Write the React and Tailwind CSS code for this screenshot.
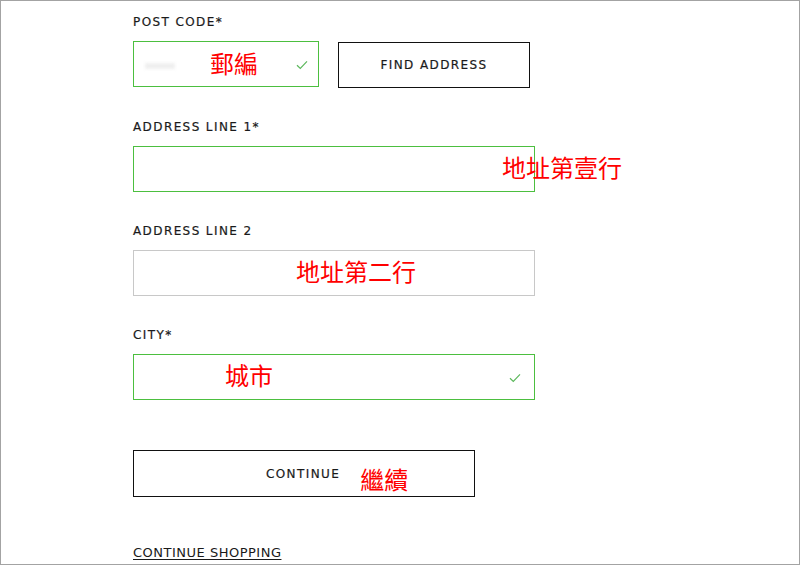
import React from 'react';

const labelFont = { fontFamily: '"DejaVu Sans", "Liberation Sans", sans-serif' };
const cjkFont = { fontFamily: '"Noto Sans CJK TC", "Noto Sans CJK SC", sans-serif' };

const Check = () => (
    <svg className="shrink-0" width="12" height="10" viewBox="0 0 12 10" fill="none">
        <path d="M1 5.2 L4.3 8.4 L11 1.4" stroke="#5cb85c" strokeWidth="1.2" />
    </svg>
);

// Red annotation written over the form
const Note = ({ children, className = '' }) => (
    <span
        className={`shrink-0 text-[24px] leading-none text-[#ff0000] whitespace-nowrap ${className}`}
        style={cjkFont}
    >
        {children}
    </span>
);

const Label = ({ children }) => (
    <div
        className="h-5 leading-5 mb-[9px] text-[12px] tracking-[1.4px] text-[#1a1a1a] [-webkit-text-stroke:0.2px_#1a1a1a]"
        style={labelFont}
    >
        {children}
    </div>
);

const Field = ({ label, border, children }) => (
    <div className="mt-[29px]">
        <Label>{label}</Label>
        <div className={`w-[402px] h-[46px] border ${border} flex items-center`}>{children}</div>
    </div>
);

export default function App() {
    return (
        <div className="w-[800px] h-[565px] bg-white border border-[#a3a3a3] overflow-hidden">
            <div className="pl-[132px] pt-[11px]">
                {/* Post code */}
                <Label>POST CODE*</Label>
                <div className="flex gap-[19px] items-start">
                    <div className="w-[186px] h-[46px] border border-[#4cbf3f] flex items-center pl-[11px] pr-[10px]">
                        <span className="w-[30px] h-[6px] bg-[#efefef] blur-[1.5px] mt-[3px]" />
                        <Note className="ml-[35px] -mt-[2px]">郵編</Note>
                        <span className="ml-auto mt-px">
                            <Check />
                        </span>
                    </div>
                    <button
                        className="w-[192px] h-[46px] mt-px border border-[#111] text-[12px] tracking-[1.4px] text-[#1a1a1a] [-webkit-text-stroke:0.2px_#1a1a1a]"
                        style={labelFont}
                    >
                        FIND ADDRESS
                    </button>
                </div>

                <Field label="ADDRESS LINE 1*" border="border-[#4cbf3f]">
                    <Note className="ml-[368px] -mt-[5px]">地址第壹行</Note>
                </Field>

                <Field label="ADDRESS LINE 2" border="border-[#c8c8c8]">
                    <Note className="ml-[162px] -mt-[5px]">地址第二行</Note>
                </Field>

                <Field label="CITY*" border="border-[#4cbf3f]">
                    <Note className="ml-[91px] -mt-[5px]">城市</Note>
                    <span className="ml-auto mr-[13px] mt-px">
                        <Check />
                    </span>
                </Field>

                <div className="mt-[50px] w-[342px] h-[47px] border border-[#111] flex items-center">
                    <span
                        className="ml-[132px] text-[12px] tracking-[1.4px] text-[#1a1a1a] [-webkit-text-stroke:0.2px_#1a1a1a]"
                        style={labelFont}
                    >
                        CONTINUE
                    </span>
                    <Note className="ml-[20px] mt-[10px]">繼續</Note>
                </div>

                <div className="mt-[42px]">
                    <a
                        href="#"
                        className="text-[13px] tracking-[0.5px] text-[#1a1a1a] underline underline-offset-2"
                        style={labelFont}
                    >
                        CONTINUE SHOPPING
                    </a>
                </div>
            </div>
        </div>
    );
}
